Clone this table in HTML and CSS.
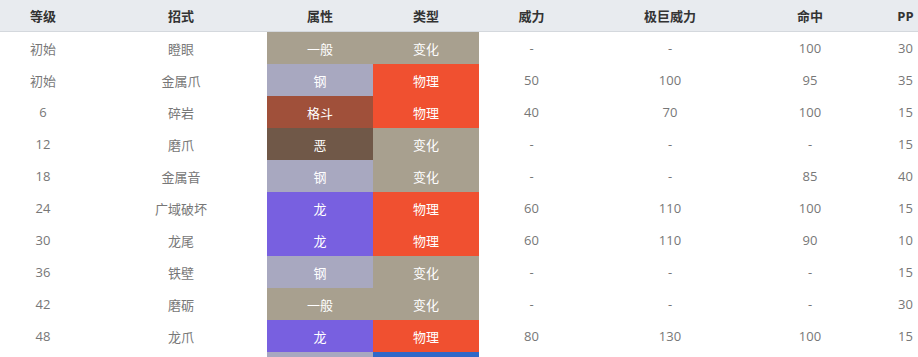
FILE: index.html
```html
<!DOCTYPE html>
<html lang="zh-CN">
<head>
<meta charset="utf-8">
<title>招式表</title>
<link rel="stylesheet" href="styles.css">
</head>
<body>
<table class="moves">
  <colgroup>
    <col class="w-lv"><col class="w-wide"><col class="w-type"><col class="w-type">
    <col class="w-pow"><col class="w-wide"><col class="w-acc"><col class="w-pp">
  </colgroup>
  <thead>
    <tr>
      <th class="lv">等级</th><th>招式</th><th>属性</th><th>类型</th>
      <th>威力</th><th>极巨威力</th><th>命中</th><th>PP</th>
    </tr>
  </thead>
  <tbody>
    <tr><td class="lv">初始</td><td>瞪眼</td><td class="t-normal">一般</td><td class="c-status">变化</td><td>-</td><td>-</td><td>100</td><td>30</td></tr>
    <tr><td class="lv">初始</td><td>金属爪</td><td class="t-steel">钢</td><td class="c-physical">物理</td><td>50</td><td>100</td><td>95</td><td>35</td></tr>
    <tr><td class="lv">6</td><td>碎岩</td><td class="t-fighting">格斗</td><td class="c-physical">物理</td><td>40</td><td>70</td><td>100</td><td>15</td></tr>
    <tr><td class="lv">12</td><td>磨爪</td><td class="t-dark">恶</td><td class="c-status">变化</td><td>-</td><td>-</td><td>-</td><td>15</td></tr>
    <tr><td class="lv">18</td><td>金属音</td><td class="t-steel">钢</td><td class="c-status">变化</td><td>-</td><td>-</td><td>85</td><td>40</td></tr>
    <tr><td class="lv">24</td><td>广域破坏</td><td class="t-dragon">龙</td><td class="c-physical">物理</td><td>60</td><td>110</td><td>100</td><td>15</td></tr>
    <tr><td class="lv">30</td><td>龙尾</td><td class="t-dragon">龙</td><td class="c-physical">物理</td><td>60</td><td>110</td><td>90</td><td>10</td></tr>
    <tr><td class="lv">36</td><td>铁壁</td><td class="t-steel">钢</td><td class="c-status">变化</td><td>-</td><td>-</td><td>-</td><td>15</td></tr>
    <tr><td class="lv">42</td><td>磨砺</td><td class="t-normal">一般</td><td class="c-status">变化</td><td>-</td><td>-</td><td>-</td><td>30</td></tr>
    <tr><td class="lv">48</td><td>龙爪</td><td class="t-dragon">龙</td><td class="c-physical">物理</td><td>80</td><td>130</td><td>100</td><td>15</td></tr>
    <tr class="peek"><td class="lv"></td><td></td><td class="t-steel"></td><td class="c-special"></td><td></td><td></td><td></td><td></td></tr>
  </tbody>
</table>
</body>
</html>
```
FILE: styles.css
```css
html, body {
  margin: 0;
  padding: 0;
  background: #fff;
  overflow: hidden;
}

.moves {
  border-collapse: collapse;
  table-layout: fixed;
  width: 947px;
  font-family: "Open Sans", "Noto Sans CJK SC", sans-serif;
  font-size: 13px;
}

.w-lv { width: 95px; }
.w-wide { width: 172px; }
.w-type { width: 106px; }
.w-pow { width: 105px; }
.w-acc { width: 108px; }
.w-pp { width: 83px; }

.moves th {
  height: 31px;
  padding: 0;
  background: #e8ebef;
  border-bottom: 1px solid #d4d8dd;
  color: #333;
  font-weight: bold;
  text-align: center;
}

.moves td {
  height: 32px;
  padding: 0;
  color: #777;
  text-align: center;
}

.moves .lv {
  padding-right: 9px;
}

.moves td.t-normal,
.moves td.t-steel,
.moves td.t-fighting,
.moves td.t-dark,
.moves td.t-dragon,
.moves td.c-status,
.moves td.c-physical,
.moves td.c-special {
  color: #fff;
}

.t-normal { background: #a8a08f; }
.t-steel { background: #a8a8c0; }
.t-fighting { background: #a0503a; }
.t-dark { background: #705848; }
.t-dragon { background: #7860e0; }
.c-status { background: #a8a08f; }
.c-physical { background: #f05030; }
.c-special { background: #3068c8; }
```
